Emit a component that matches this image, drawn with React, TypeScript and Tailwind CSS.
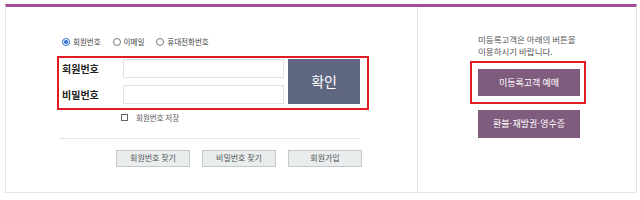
const font = "font-['Noto_Sans_CJK_KR','Noto_Sans',sans-serif]";

function Radio({ label, checked }: { label: string; checked?: boolean }) {
  return (
    <label className="flex items-center gap-[3px]">
      <span
        className={`flex h-[8px] w-[8px] items-center justify-center rounded-full border ${
          checked ? "border-[#2f6fd6]" : "border-[#777]"
        } bg-white`}
      >
        {checked && <span className="h-[4px] w-[4px] rounded-full bg-[#2f6fd6]" />}
      </span>
      <span>{label}</span>
    </label>
  );
}

function GrayButton({ children }: { children: string }) {
  return (
    <button className="flex h-[17px] w-[74px] items-center justify-center border border-[#c4c8c8] bg-[#e9eded] text-[8px] text-[#555]">
      {children}
    </button>
  );
}

const Dot = () => <span className="font-['Liberation_Sans',sans-serif]">·</span>;

export default function App() {
  return (
    <div className={`h-[200px] w-[640px] bg-white pt-[4px] pl-[5px] ${font}`}>
      <div className="flex h-[189px] w-[632px] border-x border-b border-t-[3px] border-x-[#e4e4e4] border-b-[#e4e4e4] border-t-[#a34c98]">
        {/* login */}
        <div className="w-[411px] pl-[51px]">
          <div className="mt-[29px] flex h-[12px] items-center gap-[12px] pl-[5px] text-[7.5px] leading-none text-[#444]">
            <Radio label="회원번호" checked />
            <Radio label="이메일" />
            <Radio label="휴대전화번호" />
          </div>

          <div className="mt-[8px] flex h-[54px] w-[312px] border-2 border-[#e01d22] pt-[1px] pr-[7px] pl-[3px]">
            <div className="flex w-[62px] flex-col">
              <div className="flex h-[19px] items-center text-[10px] font-bold text-[#222]">회원번호</div>
              <div className="mt-[7px] flex h-[19px] items-center text-[10px] font-bold text-[#222]">비밀번호</div>
            </div>
            <div className="flex flex-col gap-[7px]">
              <input className="h-[19px] w-[161px] border border-[#e2e2e2] bg-white outline-none" />
              <input type="password" className="h-[19px] w-[161px] border border-[#e2e2e2] bg-white outline-none" />
            </div>
            <button className="ml-[4px] flex h-[45px] w-[73px] items-center justify-center bg-[#5e6680] text-[14px] text-white">
              확인
            </button>
          </div>

          <div className="mt-[4px] flex items-center gap-[8px] pl-[64px] text-[7.5px] leading-none text-[#555]">
            <span className="h-[7px] w-[7px] border border-[#666] bg-white" />
            <span>회원번호 저장</span>
          </div>

          <div className="mt-[16px] ml-[3px] w-[300px] border-t border-dotted border-[#cfcfcf]" />

          <div className="mt-[11px] flex gap-[12px] pl-[59px]">
            <GrayButton>회원번호 찾기</GrayButton>
            <GrayButton>비밀번호 찾기</GrayButton>
            <GrayButton>회원가입</GrayButton>
          </div>
        </div>

        {/* guest */}
        <div className="flex-1 border-l border-[#e4e4e4] pl-[60px]">
          <p className="mt-[26px] text-[8.5px] leading-[12px] text-[#555]">
            미등록고객은 아래의 버튼을
            <br />
            이용하시기 바랍니다.
          </p>
          <div className="mt-[4px] -ml-[8px] w-[116px] border-2 border-[#e01d22] p-[6px]">
            <button className="flex h-[27px] w-[102px] items-center justify-center bg-[#7f5b7e] text-[9px] text-white">
              미등록고객 예매
            </button>
          </div>
          <button className="mt-[6px] flex h-[28px] w-[102px] items-center justify-center bg-[#7f5b7e] text-[9px] text-white">
            환불<Dot />재발권<Dot />영수증
          </button>
        </div>
      </div>
    </div>
  );
}
